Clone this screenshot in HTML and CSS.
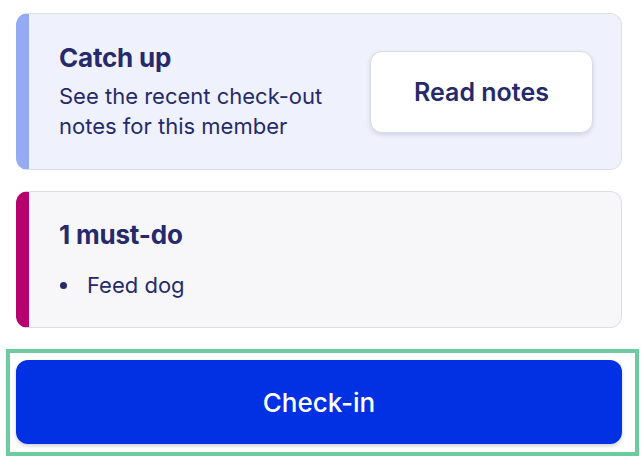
FILE: index.html
```html
<!DOCTYPE html>
<html lang="en">
<head>
    <meta charset="UTF-8">
    <meta name="viewport" content="width=device-width, initial-scale=1.0">
    <title>Visit</title>
    <link rel="stylesheet" href="styles.css">
</head>
<body>
<main class="visit">
    <section class="card card-notes">
        <div class="card-text">
            <h2>Catch up</h2>
            <p>See the recent check-out<br>notes for this member</p>
        </div>
        <button class="btn-notes">Read notes</button>
    </section>

    <section class="card card-todo">
        <h2>1 must-do</h2>
        <ul class="todo-list">
            <li>Feed dog</li>
        </ul>
    </section>

    <div class="checkin-wrap">
        <button class="btn-checkin">Check-in</button>
    </div>
</main>
</body>
</html>
```

FILE: styles.css
```css
:root {
    --navy: #262a6b;
    --card-border: #dcdde9;
    --notes-bg: #eff2fc;
    --notes-accent: #94aaf3;
    --todo-bg: #f7f7fa;
    --todo-accent: #b5006e;
    --blue: #0131e3;
    --focus: #6ccb9f;
}

body {
    margin: 0;
    background: #fff;
    font-family: Inter, 'Noto Sans', sans-serif;
    color: var(--navy);
}

.visit {
    padding: 13px 5px 0 6px;
}

.card {
    margin: 0 17px 21px 10px;
    border: 1px solid var(--card-border);
    border-radius: 12px;
    border-left-width: 13px;
}

.card h2 {
    margin: 0;
    font-size: 26px;
    line-height: 30px;
    font-weight: 700;
    letter-spacing: -0.2px;
}

.card-notes {
    display: flex;
    align-items: center;
    justify-content: space-between;
    padding: 29px 28px 28px 30px;
    background: var(--notes-bg);
    border-left-color: var(--notes-accent);
}

.card-notes h2 {
    margin-bottom: 8px;
}

.card-notes p {
    margin: 0;
    font-size: 22px;
    line-height: 30px;
}

.btn-notes {
    width: 223px;
    height: 82px;
    background: #fff;
    border: 1px solid #d9dae8;
    border-radius: 12px;
    box-shadow: 0 2px 4px rgba(38, 42, 107, 0.15);
    font-family: inherit;
    font-size: 25px;
    font-weight: 600;
    color: var(--navy);
    cursor: pointer;
}

.card-todo {
    padding: 28px 30px 27px 30px;
    background: var(--todo-bg);
    border-left-color: var(--todo-accent);
}

.todo-list {
    list-style: none;
    margin: 20px 0 0;
    padding: 0;
}

.todo-list li {
    display: flex;
    align-items: center;
    font-size: 22px;
    line-height: 30px;
}

.todo-list li::before {
    content: "";
    width: 7px;
    height: 7px;
    margin: 0 20px 0 1px;
    border-radius: 50%;
    background: var(--navy);
}

.checkin-wrap {
    margin-top: 4px;
    border: 4px solid var(--focus);
    padding: 7px 13px 8px 6px;
}

.btn-checkin {
    display: block;
    width: 100%;
    height: 84px;
    background: var(--blue);
    border: none;
    border-radius: 12px;
    box-shadow: 0 2px 4px rgba(0, 20, 90, 0.2);
    color: #fff;
    font-family: inherit;
    font-size: 26px;
    font-weight: 500;
    cursor: pointer;
}
```
